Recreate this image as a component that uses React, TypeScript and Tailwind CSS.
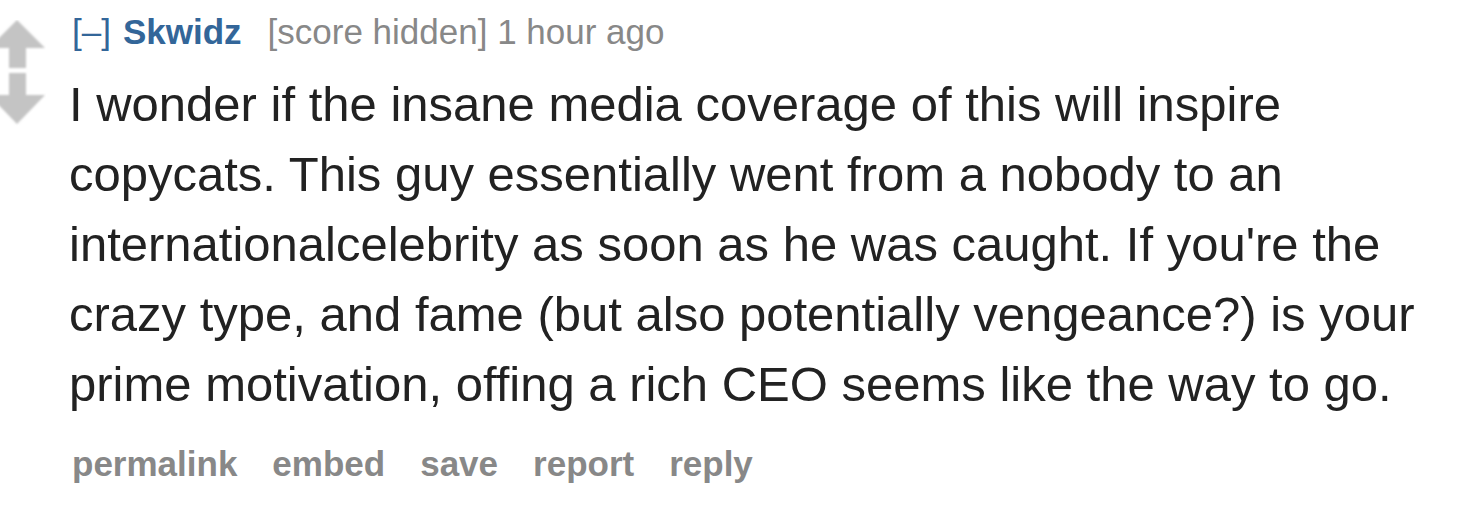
export default function App() {
  return (
    <div className="w-[1458px] h-[508px] bg-white font-['Liberation_Sans',Arial,sans-serif] flex">
      {/* vote arrows */}
      <div className="w-[70px] shrink-0 pt-[20px]">
        <svg width="46" height="106" viewBox="0 0 46 106">
          <defs>
            <filter id="soft" x="-20%" y="-10%" width="140%" height="120%">
              <feGaussianBlur stdDeviation="0.8" />
            </filter>
          </defs>
          <g fill="#c4c4c4" filter="url(#soft)">
            <polygon points="17,0 45,28 -11,28" />
            <rect x="9" y="27" width="17" height="21" />
            <rect x="9" y="53" width="17" height="23" />
            <polygon points="-11,75 45,75 17,104" />
          </g>
        </svg>
      </div>

      {/* comment */}
      <div className="flex-1 pt-[10px]">
        <div className="flex items-baseline text-[35px] leading-[44px]">
          <span className="text-[#336699] ml-[2px]">[–]</span>
          <span className="text-[#336699] font-bold ml-[12px]">Skwidz</span>
          <span className="text-[#888888] ml-[26px]">[score hidden] 1 hour ago</span>
        </div>
        <p className="text-[#222222] text-[49px] leading-[70px] mt-[15px] -ml-[1px] w-[1370px]">
          I wonder if the insane media coverage of this will inspire copycats. This guy essentially went from a nobody to an internationalcelebrity as soon as he was caught. If you're the crazy type, and fame (but also potentially vengeance?) is your prime motivation, offing a rich CEO seems like the way to go.
        </p>
        <div className="flex gap-[35px] mt-[23px] ml-[2px] font-bold text-[35px] leading-[44px] text-[#888888]">
          <span>permalink</span>
          <span>embed</span>
          <span>save</span>
          <span>report</span>
          <span>reply</span>
        </div>
      </div>
    </div>
  )
}
